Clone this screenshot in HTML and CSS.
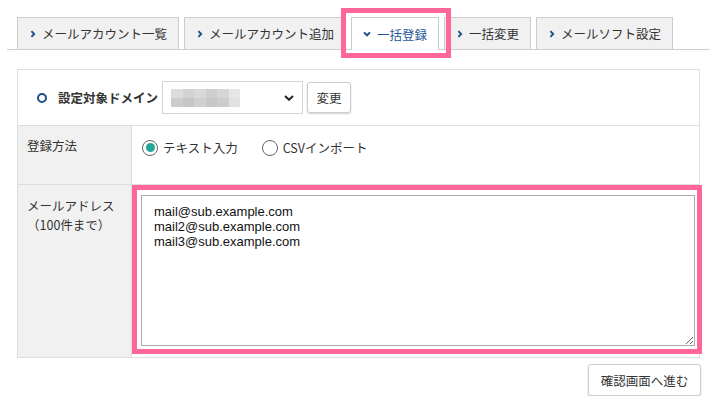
FILE: index.html
```html
<!DOCTYPE html>
<html lang="ja">
<head>
<meta charset="utf-8">
<title>一括登録</title>
<link rel="stylesheet" href="styles.css">
</head>
<body>
<div class="tabs">
  <div class="tab"><svg class="chev" viewBox="0 0 6 8" width="6" height="8"><polyline points="1.4,1.2 4.2,4 1.4,6.8"/></svg><span>メールアカウント一覧</span></div>
  <div class="tab"><svg class="chev" viewBox="0 0 6 8" width="6" height="8"><polyline points="1.4,1.2 4.2,4 1.4,6.8"/></svg><span>メールアカウント追加</span></div>
  <div class="tab active"><svg class="chev chev-down" viewBox="0 0 8 8" width="8" height="8"><polyline points="1,2.4 4,5.3 7,2.4"/></svg><span>一括登録</span><span class="hl hl-tab"></span></div>
  <div class="tab"><svg class="chev" viewBox="0 0 6 8" width="6" height="8"><polyline points="1.4,1.2 4.2,4 1.4,6.8"/></svg><span>一括変更</span></div>
  <div class="tab"><svg class="chev" viewBox="0 0 6 8" width="6" height="8"><polyline points="1.4,1.2 4.2,4 1.4,6.8"/></svg><span>メールソフト設定</span></div>
</div>

<div class="panel">
  <div class="row-domain">
    <span class="ring"></span>
    <span class="domain-label">設定対象ドメイン</span>
    <div class="select">
      <span class="mosaic">
        <i class="m1"></i><i class="m2"></i><i class="m3"></i><i class="m4"></i><i class="m5"></i><i class="m6"></i>
        <i class="m7"></i><i class="m8"></i><i class="m9"></i><i class="m10"></i><i class="m11"></i><i class="m12"></i>
      </span>
      <svg class="select-arrow" viewBox="0 0 10 6" width="10" height="6"><polyline points="1,1 5,4.8 9,1"/></svg>
    </div>
    <button class="btn btn-change">変更</button>
  </div>

  <div class="row">
    <div class="label">登録方法</div>
    <div class="value radios">
      <label class="radio"><span class="radio-ring checked"></span><span>テキスト入力</span></label>
      <label class="radio"><span class="radio-ring"></span><span>CSVインポート</span></label>
    </div>
  </div>

  <div class="row">
    <div class="label">メールアドレス<br>（100件まで）</div>
    <div class="value value-area">
      <textarea class="addresses">mail@sub.example.com
mail2@sub.example.com
mail3@sub.example.com</textarea>
      <span class="hl hl-area"></span>
    </div>
  </div>
</div>

<div class="actions">
  <button class="btn btn-next">確認画面へ進む</button>
</div>
</body>
</html>
```
FILE: styles.css
```css
* { box-sizing: border-box; }

html, body {
  margin: 0;
  padding: 0;
  background: #fff;
}

body {
  width: 710px;
  font-family: "Noto Sans CJK JP", "Noto Sans", sans-serif;
  font-size: 12.5px;
  color: #333;
}

/* ---------- tabs ---------- */
.tabs {
  display: flex;
  align-items: flex-end;
  gap: 5px;
  margin-left: 7px;
  padding: 17px 0 0 10px;
  border-bottom: 1px solid #cfcfcf;
  height: 50px;
}

.tab {
  position: relative;
  display: flex;
  align-items: center;
  height: 32px;
  padding: 0 11px 0 12px;
  background: #f1f1f1;
  border: 1px solid #cccccc;
  border-bottom: none;
  line-height: 19px;
  color: #333;
  white-space: nowrap;
}

.tab .chev {
  margin-right: 6px;
  fill: none;
  stroke: #1c4f8c;
  stroke-width: 1.9;
}

.tab.active {
  height: 33px;
  margin-bottom: -1px;
  background: #fff;
  color: #1f5694;
}

.tab .chev-down {
  margin-right: 6px;
  margin-left: -1px;
  stroke-width: 2;
}

/* pink highlight annotations */
.hl {
  position: absolute;
  border: 5px solid #ff6699;
  pointer-events: none;
  z-index: 2;
}

.hl-tab {
  left: -11px;
  top: -10px;
  width: 110px;
  height: 50px;
}

/* ---------- panel ---------- */
.panel {
  margin: 19px 10px 0 17px;
  border: 1px solid #dedede;
}

.row-domain {
  display: flex;
  align-items: center;
  height: 55px;
  padding-left: 19px;
}

.ring {
  width: 10px;
  height: 10px;
  border: 2.5px solid #1c4f8c;
  border-radius: 50%;
  margin-right: 11px;
}

.domain-label {
  font-weight: bold;
  line-height: 19px;
  margin-right: 4px;
}

.select {
  display: flex;
  align-items: center;
  justify-content: space-between;
  width: 141px;
  height: 33px;
  padding: 0 8px 0 8px;
  border: 1px solid #d4d4d4;
  background: #fff;
  margin-right: 4px;
}

.mosaic {
  display: grid;
  grid-template-columns: repeat(6, 11.5px);
  grid-template-rows: 9px 9px;
  filter: blur(0.7px);
}

.mosaic i { display: block; }
.m1 { background: #dcdcdc; }
.m2 { background: #d2d2d2; }
.m3 { background: #d9d9d9; }
.m4 { background: #cfcfcf; }
.m5 { background: #d6d6d6; }
.m6 { background: #e6e6e6; }
.m7 { background: #cccccc; }
.m8 { background: #c6c6c6; }
.m9 { background: #d0d0d0; }
.m10 { background: #c8c8c8; }
.m11 { background: #cdcdcd; }
.m12 { background: #e2e2e2; }

.select-arrow {
  fill: none;
  stroke: #222;
  stroke-width: 1.9;
}

.btn {
  font-family: "Noto Sans CJK JP", "Noto Sans", sans-serif;
  font-size: 12.5px;
  color: #333;
  background: #fff;
  border: 1px solid #cdcdcd;
  border-radius: 3px;
  box-shadow: 0 1px 2px rgba(0, 0, 0, 0.18);
  line-height: 19px;
  padding: 0;
}

.btn-change {
  width: 44px;
  height: 31px;
}

.row {
  display: grid;
  grid-template-columns: 114px 1fr;
  border-top: 1px solid #dedede;
}

.label {
  background: #f1f1f1;
  border-right: 1px solid #dedede;
  padding: 10px 6px 0 9px;
  line-height: 19px;
  color: #333;
}

.row:nth-child(3) .label {
  padding-top: 11px;
}

.value {
  position: relative;
}

.radios {
  display: flex;
  align-items: center;
  align-self: start;
  height: 58px;
  padding: 12px 0 27px 10px;
}

.radio {
  display: flex;
  align-items: center;
  line-height: 19px;
  margin-right: 24px;
}

.radio-ring {
  position: relative;
  width: 16px;
  height: 16px;
  border: 1px solid #666;
  border-radius: 50%;
  margin-right: 5px;
  background: #fff;
}

.radio-ring.checked::after {
  content: "";
  position: absolute;
  left: 2.5px;
  top: 2.5px;
  width: 9px;
  height: 9px;
  border-radius: 50%;
  background: #26a69a;
}

.value-area {
  padding: 10px 0 11px 9px;
}

.addresses {
  display: block;
  width: 554px;
  height: 151px;
  margin: 0;
  padding: 8px 12px;
  border: 1px solid #a9a9a9;
  font-family: "Liberation Sans", Arial, sans-serif;
  font-size: 13px;
  line-height: 15px;
  color: #111;
  background: #fff;
}

.hl-area {
  left: 0;
  top: 0;
  width: 570px;
  height: 169px;
}

/* ---------- actions ---------- */
.actions {
  display: flex;
  justify-content: flex-end;
  padding: 6px 9px 0 0;
}

.btn-next {
  width: 113px;
  height: 32px;
}
```
